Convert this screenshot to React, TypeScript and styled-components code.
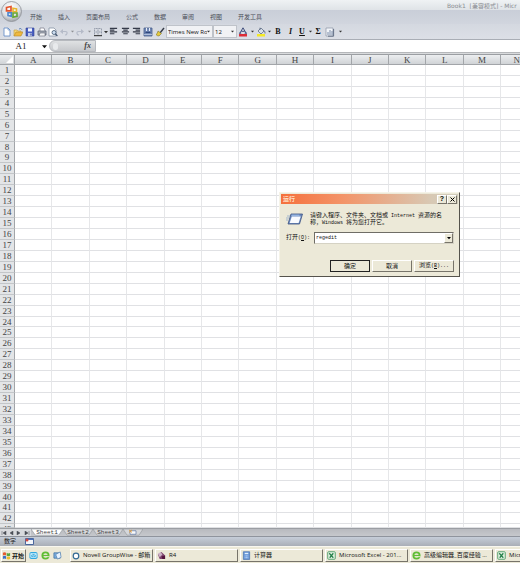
import React from "react";
import styled, { createGlobalStyle, css } from "styled-components";

const ui = `"Liberation Sans", "Noto Sans CJK SC", sans-serif`;
const tahoma = `"Open Sans", "Noto Sans CJK SC", sans-serif`;
const serif = `"Liberation Serif", "Noto Sans CJK SC", serif`;
const mono = `"Liberation Mono", "Noto Sans CJK SC", monospace`;

const GlobalStyle = createGlobalStyle`
  * { box-sizing: border-box; }
  body { margin: 0; overflow: hidden; background: #fff; }
  button, input, select { font: inherit; color: inherit; margin: 0; padding: 0; }
  svg { display: block; flex: none; }
`;

const Desktop = styled.div`
  position: relative;
  display: flex;
  flex-direction: column;
  height: 100vh;
  overflow: hidden;
  font-family: ${ui};
  font-size: 7px;
  color: #222;
`;

const Header = styled.header`
  position: relative;
  flex: none;
  background: #d3d7df;
`;

const TitleBar = styled.div`
  display: flex;
  justify-content: flex-end;
  height: 10px;
  background: linear-gradient(#eff2f4, #dfe3e7);
  overflow: hidden;
`;

const Title = styled.div`
  flex: none;
  width: 73px;
  font: 6px/11px "DejaVu Sans", "Noto Sans CJK SC", sans-serif;
  color: #8a8d92;
  white-space: pre;
`;

const RibbonTabs = styled.nav`
  display: flex;
  gap: 16px;
  height: 14px;
  padding-left: 30px;
  background: linear-gradient(#c9ced8, #d1d5de);
`;

const RibbonTab = styled.button`
  border: 0;
  background: none;
  font: 6px/14px ${ui};
  color: #4a4e58;
  white-space: nowrap;
`;

const OfficeButton = styled.button`
  position: absolute;
  left: 1px;
  top: 1px;
  width: 21px;
  height: 21px;
  padding: 0;
  border: 0;
  background: none;
`;

const Toolbar = styled.div`
  display: flex;
  align-items: center;
  height: 16px;
  padding-left: 1px;
  background: linear-gradient(#d4d8e0, #dcdfe6);
  border-bottom: 1px solid #a9adb5;
`;

const Tool = styled.button<{ $w?: number; $faded?: boolean }>`
  display: flex;
  align-items: center;
  justify-content: center;
  flex: none;
  width: ${(p) => p.$w ?? 12}px;
  height: 14px;
  border: 0;
  background: none;
  opacity: ${(p) => (p.$faded ? 0.45 : 1)};
`;

const Letter = styled.span<{ $italic?: boolean; $under?: boolean }>`
  font: ${(p) => (p.$italic ? "italic" : "normal")} bold 8px/8px ${serif};
  text-decoration: ${(p) => (p.$under ? "underline" : "none")};
  color: #111;
`;

const Combo = styled.label<{ $w: number }>`
  display: flex;
  align-items: center;
  flex: none;
  width: ${(p) => p.$w}px;
  height: 13px;
  padding: 0 2px 0 1px;
  background: #f1f2f5;
  border: 1px solid #bfc3ca;
`;

const ComboSelect = styled.select`
  appearance: none;
  flex: 1;
  min-width: 0;
  border: 0;
  background: none;
  font: 6px/10px ${tahoma};
  color: #111;
  overflow: hidden;
`;

const FormulaBar = styled.div`
  display: flex;
  height: 12px;
  background: #fff;
`;

const NameBox = styled.label`
  display: flex;
  align-items: center;
  width: 49px;
  flex: none;
  padding-right: 2px;
`;

const NameInput = styled.input`
  flex: 1;
  min-width: 0;
  border: 0;
  background: none;
  text-align: center;
  font: 9px/11px ${serif};
`;

const FxHandle = styled.div`
  display: flex;
  align-items: center;
  justify-content: space-between;
  flex: none;
  width: 47px;
  padding: 0 4px 0 3px;
  background: linear-gradient(#dfe1e3, #c6c8cc);
  border: 1px solid #b6b9be;
  border-radius: 6px 0 0 6px;
`;

const Dimple = styled.span`
  width: 5px;
  height: 7px;
  border-radius: 4px;
  background: #e8eaec;
`;

const FxButton = styled.button`
  border: 0;
  background: none;
  font: italic bold 8px/10px ${serif};
  color: #444;
`;

const FormulaInput = styled.input`
  flex: 1;
  min-width: 0;
  border: 0;
  background: #fff;
`;

const Divider = styled.div`
  flex: none;
  height: 2px;
  background: #d9dbdd;
  border-top: 1px solid #b5b7ba;
`;

const Sheet = styled.table`
  display: flex;
  flex-direction: column;
  flex: 1;
  min-height: 0;
  font: 9px/10px ${serif};
  color: #444;
`;

const SheetHead = styled.thead`
  display: block;
  flex: none;
`;

const SheetBody = styled.tbody`
  display: grid;
  flex: 1;
  min-height: 0;
  grid-template-rows: repeat(42, minmax(0, 3fr)) minmax(0, 1fr);
`;

const SheetRow = styled.tr`
  display: grid;
  grid-template-columns: 15px repeat(13, minmax(0, 2fr)) minmax(0, 1fr);
  min-height: 0;
  overflow: hidden;
`;

const headCell = css`
  padding: 0;
  font-weight: normal;
  text-align: center;
  overflow: hidden;
  border-right: 1px solid #a2a5a9;
`;

const ColumnHead = styled.th`
  ${headCell}
  height: 11px;
  line-height: 11px;
  background: linear-gradient(#eceef0, #d0d3d6);
  border-top: 1px solid #9b9ea2;
  border-bottom: 1px solid #a2a5a9;
  &:last-child {
    border-right: 0;
    text-align: right;
  }
`;

const Corner = styled(ColumnHead)`
  display: flex;
  justify-content: flex-end;
  align-items: center;
`;

const RowHead = styled.th`
  ${headCell}
  background: #e3e5e7;
  border-bottom: 1px solid #c3c6c9;
`;

const Cell = styled.td`
  padding: 0;
  border-right: 1px solid #e6e7e9;
  border-bottom: 1px solid #e0e1e4;
  &:last-child {
    border-right: 0;
  }
`;

const SheetTabs = styled.div`
  display: flex;
  flex: none;
  height: 8px;
  background: linear-gradient(#b8babf, #c6c8cc);
  border-top: 1px solid #9b9ea3;
`;

const TabArrows = styled.div`
  display: flex;
  width: 31px;
  flex: none;
  background: #d8dadd;
`;

const ArrowButton = styled.button`
  flex: 1;
  display: flex;
  align-items: center;
  justify-content: center;
  border: 0;
  background: none;
`;

const SheetTab = styled.button<{ $active?: boolean; $w?: number }>`
  position: relative;
  width: ${(p) => p.$w ?? 30}px;
  flex: none;
  border: 0;
  background: none;
  font: 6px/7px ${mono};
  color: #444;
`;

const TabShape = styled.svg`
  position: absolute;
  inset: 0;
  width: 100%;
  height: 100%;
`;

const TabLabel = styled.span`
  position: relative;
  display: flex;
  justify-content: center;
  height: 7px;
`;

const StatusBar = styled.footer`
  display: flex;
  align-items: center;
  gap: 9px;
  flex: none;
  height: 10px;
  padding-left: 4px;
  background: linear-gradient(#c6ced9, #a9aeb7);
  border-top: 1px solid #8f949d;
  font: 6px/9px ${ui};
  color: #222;
`;

const Taskbar = styled.div`
  display: flex;
  align-items: center;
  flex: none;
  height: 17px;
  padding: 1px 0 0 1px;
  background: #ece9d8;
  border-top: 1px solid #f8f7ef;
  overflow: hidden;
`;

const raised = css`
  background: #ece9d8;
  border: 1px solid;
  border-color: #fff #77746a #77746a #fff;
`;

const StartButton = styled.button`
  ${raised}
  display: flex;
  align-items: center;
  gap: 1px;
  flex: none;
  width: 25px;
  height: 13px;
  font: bold 6px/10px ${ui};
  color: #111;
`;

const QuickLaunch = styled.div`
  display: flex;
  justify-content: space-between;
  flex: none;
  width: 33px;
  margin: 0 8px 0 3px;
`;

const Quick = styled.button`
  border: 0;
  background: none;
`;

const Tasks = styled.div`
  display: flex;
  flex: 1;
  gap: 2px;
  min-width: 0;
`;

const Task = styled.button`
  ${raised}
  display: flex;
  align-items: center;
  gap: 3px;
  flex: none;
  width: 83px;
  height: 13px;
  padding-left: 1px;
  font: 6px/11px ${tahoma};
  color: #111;
  white-space: nowrap;
`;

const Dialog = styled.section`
  position: absolute;
  left: 279px;
  top: 192px;
  width: 181px;
  padding: 1px;
  background: #ece9d8;
  border: 1px solid;
  border-color: #f5f3e8 #55534c #55534c #f5f3e8;
  font: 6px/7px ${ui};
  color: #111;
`;

const DialogTitle = styled.div`
  display: flex;
  align-items: center;
  height: 10px;
  padding: 0 1px 0 2px;
  background: linear-gradient(90deg, #f5703c, #f39468 35%, #d8c9b4 85%, #d0ccba);
  color: #ffe0c8;
`;

const DialogName = styled.h2`
  flex: 1;
  margin: 0;
  font: bold 6px/10px ${ui};
`;

const CaptionButton = styled.button`
  ${raised}
  display: flex;
  align-items: center;
  justify-content: center;
  width: 10px;
  height: 9px;
  font: bold 7px/6px ${ui};
  color: #000;
`;

const Prompt = styled.div`
  display: flex;
  align-items: center;
  gap: 7px;
  padding: 8px 0 0 5px;
`;

const Message = styled.p`
  margin: 0;
  line-height: 6px;
  white-space: nowrap;
`;

const Latin = styled.span`
  font-family: ${mono};
  font-size: 5px;
`;

const OpenRow = styled.div`
  display: flex;
  align-items: center;
  padding: 6px 4px 0 5px;
`;

const OpenLabel = styled.label`
  width: 28px;
  flex: none;
  white-space: nowrap;
`;

const OpenBox = styled.div`
  display: flex;
  flex: 1;
  height: 12px;
  background: #fff;
  border: 1px solid;
  border-color: #6f6d66 #d5d2c4 #d5d2c4 #6f6d66;
`;

const OpenInput = styled.input`
  flex: 1;
  min-width: 0;
  padding-left: 1px;
  border: 0;
  outline: 0;
  background: none;
  font: 5px/9px ${mono};
`;

const DropButton = styled.button`
  ${raised}
  display: flex;
  align-items: center;
  justify-content: center;
  width: 9px;
`;

const Actions = styled.div`
  display: flex;
  justify-content: flex-end;
  gap: 2px;
  padding: 16px 4px 3px 0;
`;

const Action = styled.button<{ $primary?: boolean }>`
  ${raised}
  width: 40px;
  height: 12px;
  font: 6px/9px ${ui};
  white-space: nowrap;
  ${(p) => p.$primary && css`border-color: #222;`}
`;

const Caret = ({ size = 4, color = "#333" }: { size?: number; color?: string }) => (
  <svg width={size} height={size} viewBox="0 0 4 4">
    <path d="M0 1h4L2 3.3z" fill={color} />
  </svg>
);

const Glyph = ({ children, size = 10 }: { children: React.ReactNode; size?: number }) => (
  <svg width={size} height={size} viewBox="0 0 10 10" fill="none">
    {children}
  </svg>
);

const NewIcon = () => (
  <Glyph><path d="M2 1h4l2 2v6H2z" fill="#fff" stroke="#5b87c4" strokeWidth=".8" /><path d="M6 1v2h2" stroke="#5b87c4" strokeWidth=".6" /></Glyph>
);
const OpenIcon = () => (
  <Glyph><path d="M1 9V3h3l1 1h3v2" fill="#f7d774" stroke="#c09a3c" strokeWidth=".6" /><path d="M1 9l2-4h7L8 9z" fill="#f0b93e" stroke="#b5882a" strokeWidth=".6" /><path d="M6 2q2-1.500 3 .8" stroke="#4570ad" strokeWidth=".8" /></Glyph>
);
const SaveIcon = () => (
  <Glyph><path d="M1 1h8v8H1z" fill="#4a5fc0" stroke="#2f4296" strokeWidth=".6" /><path d="M3 1.300h4v3.200H3z" fill="#f0f4fd" /><path d="M3 6h4v3H3z" fill="#c2cbe8" /><path d="M5.500 6.500h1v2h-1z" fill="#263784" /></Glyph>
);
const PrintIcon = () => (
  <Glyph><path d="M3 4V1h4l1 3" fill="#fff" stroke="#667" strokeWidth=".6" /><path d="M1 4h8v4H1z" fill="#a7adb8" stroke="#606878" strokeWidth=".8" /><path d="M3 6h5v3H2z" fill="#f2f3f5" stroke="#505765" strokeWidth=".5" /></Glyph>
);
const PreviewIcon = () => (
  <Glyph><path d="M1 1h5l2 2v6H1z" fill="#fff" stroke="#7a869b" strokeWidth=".7" /><circle cx="6" cy="5.500" r="2" fill="#cfe0f3" stroke="#3f546f" strokeWidth=".8" /><path d="M7.400 7l2 2" stroke="#3f546f" strokeWidth="1.200" /></Glyph>
);
const UndoIcon = ({ flip }: { flip?: boolean }) => (
  <Glyph><g transform={flip ? "translate(10 0) scale(-1 1)" : undefined}><path d="M2 4.500h4.500q2 .3 1.500 2T6 8" stroke="#8a93a8" strokeWidth="1.100" /><path d="M4 2L1 4.500 4 7z" fill="#8a93a8" /></g></Glyph>
);
const BordersIcon = () => (
  <Glyph><path d="M1.500 1.500h7v7M5 1.500v7M1.500 1.500v7M1.500 5h7" stroke="#7b8495" strokeWidth=".7" strokeDasharray="1 .5" /><path d="M1 8.700h8" stroke="#222" /></Glyph>
);
const AlignIcon = ({ d }: { d: string }) => (
  <Glyph size={9}><path d={d} stroke="#343a48" strokeWidth="1.300" /></Glyph>
);
const MergeIcon = () => (
  <Glyph><path d="M1 1h8v8H1z" fill="#7188b5" stroke="#4a5f8e" strokeWidth=".8" /><path d="M3.500 1v3M6.500 1v3" stroke="#e6edf9" strokeWidth="1" /><path d="M1 7.500h8" stroke="#dbe5f7" strokeWidth=".6" /><path d="M2.500 5.300h5" stroke="#20376e" /></Glyph>
);
const BrushIcon = () => (
  <Glyph><path d="M9 1L5 6" stroke="#353b47" strokeWidth="1.400" /><path d="M3 4l3.500 2.500L4 9Q2 9 1 7.500q1.500-.5 2-3.500z" fill="#e5ca3e" stroke="#6d6427" strokeWidth=".5" /></Glyph>
);
const FontColorIcon = () => (
  <Glyph><path d="M2 6L5 .8 8 6M3.400 4.300h3.300M1 6.200h2.200M6.700 6.200H9" stroke="#3c4a7a" strokeWidth="1" /><path d="M1 7h8v2.500H1z" fill="#dc2c37" /></Glyph>
);
const FillIcon = () => (
  <Glyph><path d="M2 4l3-3 3 3-3 3z" fill="#d8dfe8" stroke="#52617b" strokeWidth=".7" /><path d="M4 3V.7M7.500 3.500Q9.500 4 9 6.500" stroke="#52617b" strokeWidth=".8" /><path d="M1 7h8v2.500H1z" fill="#f4e928" /></Glyph>
);
const ChartIcon = () => (
  <Glyph><path d="M1 1h7v8H1z" fill="#f2f5f9" stroke="#8992a3" strokeWidth=".7" /><path d="M3 8V5M5 8V3M7 8V4" stroke="#7b8ba8" /><path d="M8.600 2v7.200H3" stroke="#657187" /></Glyph>
);

const OfficeLogo = () => (
  <svg width="21" height="21" viewBox="0 0 21 21" fill="none">
    <defs>
      <radialGradient id="orb" cx=".45" cy=".3" r=".75">
        <stop offset="0" stopColor="#fff" />
        <stop offset=".6" stopColor="#dfe1e4" />
        <stop offset="1" stopColor="#92979e" />
      </radialGradient>
    </defs>
    <circle cx="10.500" cy="10.500" r="10" fill="url(#orb)" stroke="#8e9298" strokeWidth=".8" />
    <path d="M5.500 6.500l4.500-1v4.300H5.500z" stroke="#e2552c" strokeWidth="1.700" />
    <path d="M12 7.200l3.500.6v3H12z" stroke="#e9b52d" strokeWidth="1.600" />
    <path d="M7 11.800h3.300v3.500L7 14.600z" stroke="#4e86cc" strokeWidth="1.600" />
    <path d="M12 12h4v3.300l-4 .8z" stroke="#69a83a" strokeWidth="1.700" />
  </svg>
);

const RunIcon = () => (
  <svg width="17" height="14" viewBox="0 0 17 14" fill="none">
    <path d="M5 2h11.500L13.500 12H2z" fill="#6d8cc0" stroke="#3c5282" strokeWidth=".8" />
    <path d="M5.800 4.500h8.900L12.600 11H3.700z" fill="#f9fbff" />
    <path d="M5.500 3.200h8" stroke="#a9c8f0" />
    <path d="M1 4h3M0 6h3M0 8h2" stroke="#86a3c9" strokeWidth=".7" />
  </svg>
);

const StartFlag = () => (
  <Glyph size={9}><path d="M1 2q2-1 3.500 0v3Q3 4 1 5z" fill="#e45b30" /><path d="M5.200 2.300q2 1 3.800 0v3q-2 1-3.800 0z" fill="#58a43b" /><path d="M1 5.800q2-1 3.500 0v3q-1.500-1-3.500 0z" fill="#3b70c5" /><path d="M5.200 6q2 1 3.800 0v3q-2 1-3.800 0z" fill="#edbd2d" /></Glyph>
);
const MailIcon = () => (
  <Glyph size={9}><rect x=".5" y="1" width="9" height="8" rx="2" fill="#33a8df" /><path d="M2 3h6v4H2zM2 3l3 2.500L8 3" stroke="#e9faff" strokeWidth=".9" /></Glyph>
);
const BrowserIcon = () => (
  <Glyph size={9}><circle cx="5" cy="5" r="3.500" stroke="#60bd36" strokeWidth="2" /><path d="M2 5h6" stroke="#60bd36" strokeWidth="1.300" /><path d="M5.500 6.300h4" stroke="#ece9d8" /></Glyph>
);
const DesktopIcon = () => (
  <Glyph size={9}><path d="M1 2h7v6H1z" fill="#7cafe0" stroke="#3c6d9f" strokeWidth=".8" /><path d="M3 4l5-3 1 6-4 2z" fill="#e6f2ff" stroke="#4c7cae" strokeWidth=".7" /></Glyph>
);
const RingIcon = () => (
  <Glyph size={8}><circle cx="5" cy="5" r="3.500" fill="#fff" stroke="#346a95" strokeWidth="1.500" /></Glyph>
);
const R4Icon = () => (
  <Glyph size={9}><path d="M1 4l4-3 4 4-2 4H3z" fill="#7d426e" /><path d="M1 3l3-2 2 3-3 3z" fill="#ccb2c6" /><path d="M5 6l4-1v4H6z" fill="#54133c" /></Glyph>
);
const CalcIcon = () => (
  <Glyph size={9}><path d="M1.500 .8h7v8.600h-7z" fill="#6495d7" stroke="#3d68a9" strokeWidth=".7" /><path d="M3 2h4v1.500H3z" fill="#e0f0ff" /><path d="M3 5.500h4M3 7.500h4" stroke="#d6e7ff" strokeDasharray="1 .5" /></Glyph>
);
const ExcelIcon = () => (
  <Glyph size={9}><rect x=".8" y=".8" width="8.400" height="8.400" rx="1" fill="#e5f2e3" stroke="#3d945b" strokeWidth=".9" /><path d="M2.500 2.500l4.500 5M7 2.500L3 7.500" stroke="#26804a" strokeWidth="1.400" /></Glyph>
);

const lines = {
  left: "M1 1.500h8M1 3.500h5M1 5.500h8M1 7.500h5",
  center: "M1 1.500h8M2.500 3.500h5M1 5.500h8M2.500 7.500h5",
  right: "M1 1.500h8M4 3.500h5M1 5.500h8M4 7.500h5",
};

const ribbon = ["开始", "插入", "页面布局", "公式", "数据", "审阅", "视图", "开发工具"];
const columns = "ABCDEFGHIJKLMN".split("");
const rows = Array.from({ length: 43 }, (_, i) => i + 1);

const tasks: [string, React.ReactNode][] = [
  ["Novell GroupWise - 邮箱", <RingIcon />],
  ["R4", <R4Icon />],
  ["计算器", <CalcIcon />],
  ["Microsoft Excel - 201...", <ExcelIcon />],
  ["高级编辑器_百度经验 ...", <BrowserIcon />],
  ["Micro", <ExcelIcon />],
];

const arrows: [string, string][] = [
  ["First sheet", "M1 0v4M5 0v4L2 2z"],
  ["Previous sheet", "M4 0v4L1 2z"],
  ["Next sheet", "M1 0v4l3-2z"],
  ["Last sheet", "M5 0v4M1 0v4l3-2z"],
];

const WorkbookTab = ({ name, active }: { name: string; active?: boolean }) => (
  <SheetTab $active={active} $w={active ? 32 : 30}>
    <TabShape viewBox="0 0 30 8" preserveAspectRatio="none">
      <path d="M0 0h30l-4 7H4z" fill={active ? "#fff" : "#d5d7da"} stroke="#8c9096" strokeWidth=".6" />
    </TabShape>
    <TabLabel>{name}</TabLabel>
  </SheetTab>
);

const RunDialog = () => (
  <Dialog role="dialog" aria-labelledby="run-title">
    <DialogTitle>
      <DialogName id="run-title">运行</DialogName>
      <CaptionButton>?</CaptionButton>
      <CaptionButton aria-label="Close">
        <svg width="5" height="5" viewBox="0 0 5 5"><path d="M.5.5l4 4m0-4l-4 4" stroke="#000" /></svg>
      </CaptionButton>
    </DialogTitle>
    <Prompt>
      <RunIcon />
      <Message>
        请键入程序、文件夹、文档或<Latin> Internet </Latin>资源的名<br />
        称，<Latin>Windows </Latin>将为您打开它。
      </Message>
    </Prompt>
    <OpenRow>
      <OpenLabel htmlFor="run-open">打开<Latin>(<u>O</u>):</Latin></OpenLabel>
      <OpenBox>
        <OpenInput id="run-open" defaultValue="regedit" />
        <DropButton aria-label="Show list"><Caret color="#000" /></DropButton>
      </OpenBox>
    </OpenRow>
    <Actions>
      <Action $primary>确定</Action>
      <Action>取消</Action>
      <Action>浏览<Latin>(<u>B</u>)...</Latin></Action>
    </Actions>
  </Dialog>
);

export default function App() {
  return (
    <Desktop>
      <GlobalStyle />
      <Header>
        <TitleBar><Title>Book1  [兼容模式] - Micr</Title></TitleBar>
        <RibbonTabs>{ribbon.map((t) => <RibbonTab key={t}>{t}</RibbonTab>)}</RibbonTabs>
        <OfficeButton aria-label="Office"><OfficeLogo /></OfficeButton>
        <Toolbar>
          <Tool $w={11} aria-label="New"><NewIcon /></Tool>
          <Tool aria-label="Open"><OpenIcon /></Tool>
          <Tool aria-label="Save"><SaveIcon /></Tool>
          <Tool $w={11} aria-label="Print"><PrintIcon /></Tool>
          <Tool $w={11} aria-label="Preview"><PreviewIcon /></Tool>
          <Tool $faded aria-label="Undo"><UndoIcon /></Tool>
          <Tool $w={4} $faded aria-label="Undo list"><Caret size={3} /></Tool>
          <Tool $faded aria-label="Redo"><UndoIcon flip /></Tool>
          <Tool $w={6} $faded aria-label="Redo list"><Caret size={3} /></Tool>
          <Tool aria-label="Borders"><BordersIcon /></Tool>
          <Tool $w={4} aria-label="Border list"><Caret /></Tool>
          <Tool $w={11} aria-label="Align left"><AlignIcon d={lines.left} /></Tool>
          <Tool aria-label="Center"><AlignIcon d={lines.center} /></Tool>
          <Tool $w={11} aria-label="Align right"><AlignIcon d={lines.right} /></Tool>
          <Tool aria-label="Merge"><MergeIcon /></Tool>
          <Tool aria-label="Format painter"><BrushIcon /></Tool>
          <Combo $w={47}>
            <ComboSelect aria-label="Font"><option>Times New Roman</option></ComboSelect>
            <Caret size={3} />
          </Combo>
          <Combo $w={24}>
            <ComboSelect aria-label="Font size"><option>12</option></ComboSelect>
            <Caret size={3} />
          </Combo>
          <Tool aria-label="Font color"><FontColorIcon /></Tool>
          <Tool $w={6} aria-label="Font color list"><Caret size={3} /></Tool>
          <Tool aria-label="Fill color"><FillIcon /></Tool>
          <Tool $w={4} aria-label="Fill color list"><Caret size={3} /></Tool>
          <Tool $w={14}><Letter>B</Letter></Tool>
          <Tool $w={11}><Letter $italic>I</Letter></Tool>
          <Tool><Letter $under>U</Letter></Tool>
          <Tool $w={4} aria-label="Underline list"><Caret size={3} /></Tool>
          <Tool><Letter>Σ</Letter></Tool>
          <Tool aria-label="Chart"><ChartIcon /></Tool>
          <Tool $w={9} aria-label="More"><Caret size={3} /></Tool>
        </Toolbar>
        <FormulaBar>
          <NameBox>
            <NameInput aria-label="Name box" defaultValue="A1" />
            <Caret size={5} color="#111" />
          </NameBox>
          <FxHandle><Dimple /><FxButton>fx</FxButton></FxHandle>
          <FormulaInput aria-label="Formula" />
        </FormulaBar>
      </Header>
      <Divider />
      <Sheet>
        <SheetHead>
          <SheetRow>
            <Corner aria-label="Select all">
              <svg width="8" height="8" viewBox="0 0 8 8"><path d="M7 0v7H0z" fill="#fff" /></svg>
            </Corner>
            {columns.map((c) => <ColumnHead key={c} scope="col">{c}</ColumnHead>)}
          </SheetRow>
        </SheetHead>
        <SheetBody>
          {rows.map((r) => (
            <SheetRow key={r}>
              <RowHead scope="row">{r}</RowHead>
              {columns.map((c) => <Cell key={c} />)}
            </SheetRow>
          ))}
        </SheetBody>
      </Sheet>
      <SheetTabs>
        <TabArrows>
          {arrows.map(([label, d]) => (
            <ArrowButton key={label} aria-label={label}>
              <svg width="6" height="4" viewBox="0 0 6 4"><path d={d} fill="#4a4e55" stroke="#4a4e55" strokeWidth=".5" /></svg>
            </ArrowButton>
          ))}
        </TabArrows>
        <WorkbookTab name="Sheet1" active />
        <WorkbookTab name="Sheet2" />
        <WorkbookTab name="Sheet3" />
        <SheetTab $w={20} aria-label="Insert sheet">
          <TabShape viewBox="0 0 20 8" preserveAspectRatio="none">
            <path d="M0 0h20l-4 7H4z" fill="#d5d7da" stroke="#8c9096" strokeWidth=".6" />
            <path d="M7 2h6v4H7z" fill="#f8fafc" stroke="#536c9b" strokeWidth=".7" />
            <path d="M6 1l3 3M9 1L6 4" stroke="#e19a32" strokeWidth=".9" />
          </TabShape>
        </SheetTab>
      </SheetTabs>
      <StatusBar>
        <span>数字</span>
        <svg width="9" height="7" viewBox="0 0 9 7">
          <path d="M.5.500h8v6h-8z" fill="#f3f6fb" stroke="#3c5b96" strokeWidth=".9" />
          <path d="M.5 1.500h8" stroke="#4d73b8" />
          <circle cx="2" cy="2" r="1.500" fill="#d2483f" />
        </svg>
      </StatusBar>
      <Taskbar>
        <StartButton><StartFlag />开始</StartButton>
        <QuickLaunch>
          <Quick aria-label="Mail"><MailIcon /></Quick>
          <Quick aria-label="Browser"><BrowserIcon /></Quick>
          <Quick aria-label="Show desktop"><DesktopIcon /></Quick>
        </QuickLaunch>
        <Tasks>
          {tasks.map(([name, icon]) => <Task key={name}>{icon}{name}</Task>)}
        </Tasks>
      </Taskbar>
      <RunDialog />
    </Desktop>
  );
}
